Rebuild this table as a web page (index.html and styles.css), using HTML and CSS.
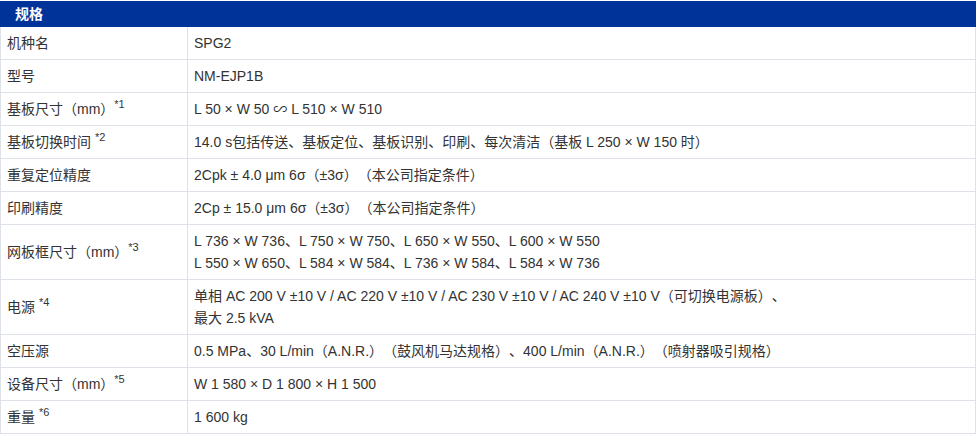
FILE: index.html
```html
<!DOCTYPE html>
<html lang="zh-CN">
<head>
<meta charset="utf-8">
<title>规格</title>
<link rel="stylesheet" href="styles.css">
</head>
<body>
<div class="spec">
  <div class="spec-head">规格</div>
  <table class="spec-table">
    <tr><td class="k">机种名</td><td class="v">SPG2</td></tr>
    <tr><td class="k">型号</td><td class="v">NM-EJP1B</td></tr>
    <tr><td class="k">基板尺寸（mm）<sup>*1</sup></td><td class="v">L 50 × W 50 ∽ L 510 × W 510</td></tr>
    <tr><td class="k">基板切换时间 <sup>*2</sup></td><td class="v">14.0 s包括传送、基板定位、基板识别、印刷、每次清洁（基板 L 250 × W 150 时）</td></tr>
    <tr><td class="k">重复定位精度</td><td class="v">2Cpk ± 4.0 μm 6σ（±3σ）（本公司指定条件）</td></tr>
    <tr><td class="k">印刷精度</td><td class="v">2Cp ± 15.0 μm 6σ（±3σ）（本公司指定条件）</td></tr>
    <tr><td class="k">网板框尺寸（mm）<sup>*3</sup></td><td class="v">L 736 × W 736、L 750 × W 750、L 650 × W 550、L 600 × W 550<br>L 550 × W 650、L 584 × W 584、L 736 × W 584、L 584 × W 736</td></tr>
    <tr><td class="k">电源 <sup>*4</sup></td><td class="v">单相 AC 200 V ±10 V / AC 220 V ±10 V / AC 230 V ±10 V / AC 240 V ±10 V（可切换电源板）、<br>最大 2.5 kVA</td></tr>
    <tr><td class="k">空压源</td><td class="v">0.5 MPa、30 L/min（A.N.R.）（鼓风机马达规格）、400 L/min（A.N.R.）（喷射器吸引规格）</td></tr>
    <tr><td class="k">设备尺寸（mm）<sup>*5</sup></td><td class="v">W 1 580 × D 1 800 × H 1 500</td></tr>
    <tr><td class="k">重量 <sup>*6</sup></td><td class="v">1 600 kg</td></tr>
  </table>
</div>
</body>
</html>
```

FILE: styles.css
```css
html, body {
  margin: 0;
  padding: 0;
  background: #ffffff;
}
body {
  font-family: "Liberation Sans", Arial, "Noto Sans CJK SC", sans-serif;
  font-size: 14px;
  color: #333333;
  text-spacing-trim: space-all;
}
.spec {
  width: 976px;
  padding-top: 1px;
}
.spec-head {
  background: #003399;
  color: #ffffff;
  font-weight: bold;
  height: 26px;
  line-height: 26px;
  padding-left: 15px;
}
.spec-table {
  width: 976px;
  border-collapse: collapse;
  table-layout: fixed;
}
.spec-table td {
  border: 1px solid #dde1e8;
  border-top: 0;
  padding: 5px 6px;
  line-height: 22px;
  vertical-align: middle;
}
.spec-table .k {
  width: 174px;
}
.spec-table sup {
  font-size: 11px;
  line-height: 0;
  vertical-align: 6px;
}
```
